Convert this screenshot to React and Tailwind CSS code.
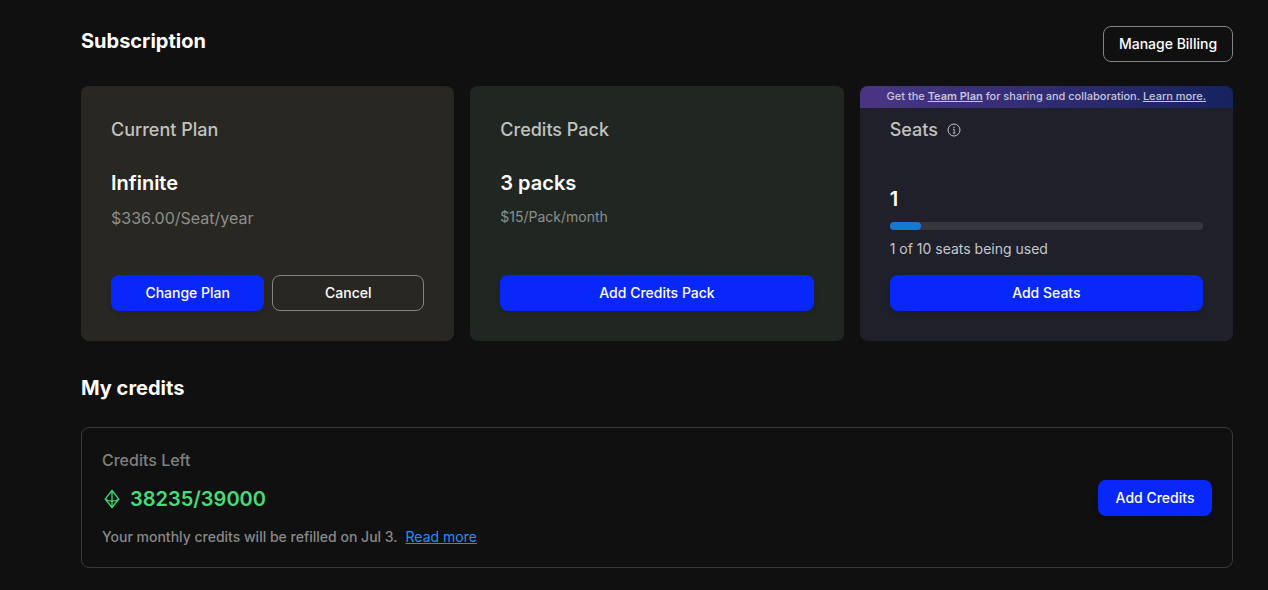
import React from "react";

const seats = { used: 1, total: 10 };

const App = () => {
  return (
    <div className="min-h-screen bg-[#101010] pl-[81px] pr-[35px] pt-[26px] font-['Inter',sans-serif] text-white">
      <header className="flex h-[60px] items-start justify-between">
        <h2 className="pt-px text-xl font-bold">Subscription</h2>
        <Button variant="outline" className="w-[130px]">
          Manage Billing
        </Button>
      </header>

      <section className="grid h-[255px] grid-cols-3 gap-4">
        <Card title="Current Plan" className="bg-[#282722]">
          <p className="mt-[25px] text-xl font-semibold">Infinite</p>
          <p className="mt-[9px] text-base text-[#8f8e8b]">
            $336.00/Seat/year
          </p>
          <div className="mt-auto flex gap-2">
            <Button className="flex-1">Change Plan</Button>
            <Button variant="outline" className="w-[152px]">
              Cancel
            </Button>
          </div>
        </Card>

        <Card title="Credits Pack" className="bg-[#202723]">
          <p className="mt-[25px] text-xl font-semibold">3 packs</p>
          <p className="mt-[10px] text-sm text-[#8b8f8d]">$15/Pack/month</p>
          <Button className="mt-auto w-full">Add Credits Pack</Button>
        </Card>

        <Card
          title="Seats"
          className="bg-[#20202a]"
          icon={<InfoIcon />}
          banner={
            <div className="flex h-[22px] items-center justify-center bg-linear-to-r from-[#4a3585] to-[#15235f] pb-px text-[11px] font-medium text-[#c8c5da]">
              <p className="whitespace-nowrap">
                Get the <a className="font-semibold underline">Team Plan</a> for
                sharing and collaboration.{" "}
                <a className="underline">Learn more.</a>
              </p>
            </div>
          }
        >
          <p className="mt-[41px] text-xl font-semibold">{seats.used}</p>
          <div className="mt-[9px] h-2 rounded-full bg-[#36363e]">
            <div
              className="h-2 rounded-full bg-[#1976d2]"
              style={{ width: `${(seats.used / seats.total) * 100}%` }}
            />
          </div>
          <p className="mt-[9px] text-sm text-[#c7c7ca]">
            {seats.used} of {seats.total} seats being used
          </p>
          <Button className="mt-auto w-full">Add Seats</Button>
        </Card>
      </section>

      <h2 className="mt-[33px] text-xl font-bold">My credits</h2>

      <section className="mt-[25px] flex h-[141px] items-center justify-between rounded-lg border border-[#3a3a3a] px-5">
        <div>
          <p className="text-base font-medium text-[#808080]">Credits Left</p>
          <div className="mt-[13px] flex items-center text-[#46dc78]">
            <CreditIcon />
            <span className="ml-2 text-xl font-semibold">38235/39000</span>
          </div>
          <p className="mt-[14px] text-sm font-medium text-[#888888]">
            Your monthly credits will be refilled on Jul 3.
            <a className="ml-2 font-normal text-[#1e90ff] underline">
              Read more
            </a>
          </p>
        </div>
        <Button className="w-[114px]">Add Credits</Button>
      </section>
    </div>
  );
};

const Card = ({ title, icon, banner, className, children }) => (
  <div className={`flex flex-col overflow-hidden rounded-lg ${className}`}>
    {banner}
    <div
      className={`flex flex-1 flex-col px-[30px] pb-[30px] ${
        banner ? "pt-2" : "pt-[30px]"
      }`}
    >
      <h3 className="flex items-center gap-[9px] text-lg font-medium text-[#c2c2c1]">
        {title}
        {icon}
      </h3>
      {children}
    </div>
  </div>
);

const Button = ({ variant = "primary", className, children }) => (
  <button
    className={`h-9 rounded-lg text-sm font-medium whitespace-nowrap ${
      variant === "outline"
        ? "border border-[#848482]"
        : "bg-[#0828fb] shadow-md"
    } ${className}`}
  >
    {children}
  </button>
);

const InfoIcon = () => (
  <svg
    className="size-[14px]"
    viewBox="0 0 14 14"
    fill="none"
    stroke="currentColor"
  >
    <circle cx="7" cy="7" r="6" />
    <path d="M6 6.2h1.2v3.9M5.8 10.1h2.6" strokeWidth="0.9" />
    <circle cx="7" cy="4.2" r="0.7" fill="currentColor" stroke="none" />
  </svg>
);

const CreditIcon = () => (
  <svg
    className="size-5"
    viewBox="0 0 20 20"
    fill="none"
    stroke="currentColor"
    strokeWidth="1.3"
    strokeLinejoin="round"
  >
    <path d="M10 1.5 3.2 10.2 10 18.5l6.8-8.3z" />
    <path d="M10 1.5v17M3.2 10.2q6.8 4 13.6 0" />
  </svg>
);

export default App;
